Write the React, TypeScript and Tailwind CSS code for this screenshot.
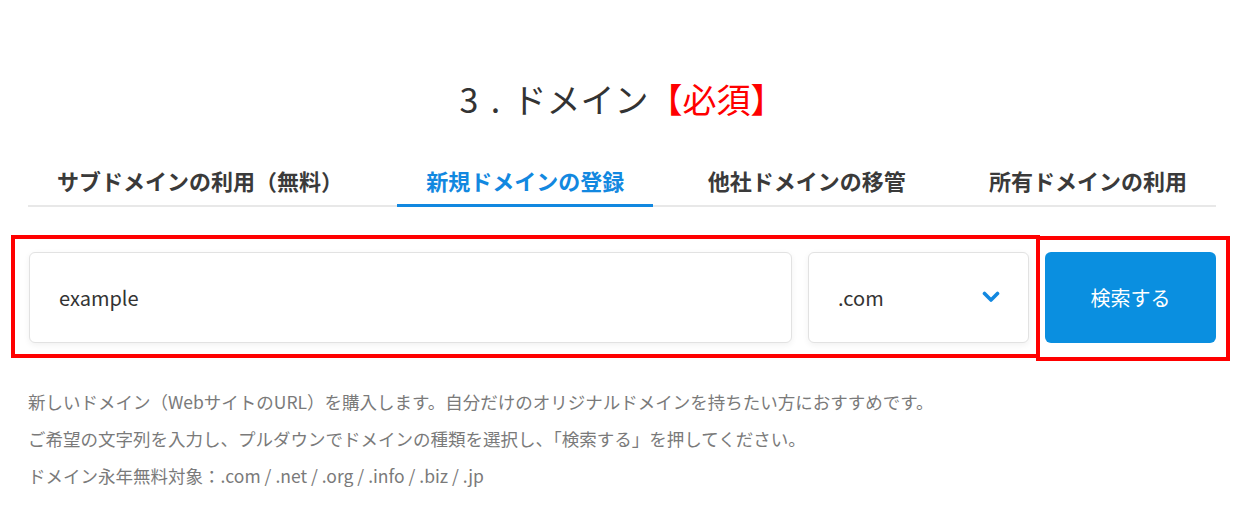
import React from "react";

const tabs = [
  { label: "サブドメインの利用（無料）", active: false },
  { label: "新規ドメインの登録", active: true },
  { label: "他社ドメインの移管", active: false },
  { label: "所有ドメインの利用", active: false },
];

const App: React.FC = () => {
  return (
    <div
      className="w-[1250px] h-[524px] bg-white text-[#333]"
      style={{ fontFamily: '"Noto Sans CJK JP", "Noto Sans", sans-serif' }}
    >
      <div className="px-[28px] pt-[75px] w-[1244px]">
        {/* Title */}
        <h1 className="text-center text-[34px] leading-[48px] font-normal text-[#333]">
          <span className="tracking-[0.36em]">3.</span>ドメイン
          <span className="text-[#ff0000]">【必須】</span>
        </h1>

        {/* Tabs */}
        <div className="mt-[41px] flex justify-between border-b-2 border-[#e8e8e8]">
          {tabs.map((tab) => (
            <div
              key={tab.label}
              className={
                "px-[29px] pb-[8px] text-[22px] leading-[32px] font-bold -mb-[2px] border-b-[3px] " +
                (tab.active
                  ? "text-[#1288e0] border-[#1288e0]"
                  : "text-[#3a3a3a] border-transparent")
              }
            >
              {tab.label}
            </div>
          ))}
        </div>

        {/* Search row */}
        <div className="relative mt-[45px] flex gap-4 pl-px">
          <div className="flex-1 h-[91px] flex items-center px-[29px] bg-white border border-[#e2e2e2] rounded-[6px] shadow-[0_2px_6px_rgba(0,0,0,0.06)] text-[20px] text-[#333]">
            example
          </div>
          <div className="w-[221px] h-[91px] flex items-center justify-between pl-[29px] pr-[28px] bg-white border border-[#e2e2e2] rounded-[6px] shadow-[0_2px_6px_rgba(0,0,0,0.06)] text-[20px] text-[#333]">
            <span>.com</span>
            <svg width="18" height="12" viewBox="0 0 18 12" className="mb-[2px]">
              <polyline
                points="2.5,2.5 9,9 15.5,2.5"
                fill="none"
                stroke="#1288e0"
                strokeWidth="3.6"
                strokeLinecap="round"
                strokeLinejoin="round"
              />
            </svg>
          </div>
          <button className="w-[171px] h-[91px] bg-[#0a8fe0] text-white text-[20px] rounded-[6px]">
            検索する
          </button>

          {/* annotation frames */}
          <div className="pointer-events-none absolute left-[-17px] top-[-17px] w-[1029px] h-[123px] border-4 border-[#ff0000]" />
          <div className="pointer-events-none absolute left-[1008px] top-[-16px] w-[194px] h-[125px] border-4 border-[#ff0000]" />
        </div>

        {/* Description */}
        <div className="mt-[40px] text-[17.5px] leading-[37px] text-[#7a7a7a]">
          <p>新しいドメイン（WebサイトのURL）を購入します。自分だけのオリジナルドメインを持ちたい方におすすめです。</p>
          <p>ご希望の文字列を入力し、プルダウンでドメインの種類を選択し、「検索する」を押してください。</p>
          <p>ドメイン永年無料対象：.com / .net / .org / .info / .biz / .jp</p>
        </div>
      </div>
    </div>
  );
};

export default App;
